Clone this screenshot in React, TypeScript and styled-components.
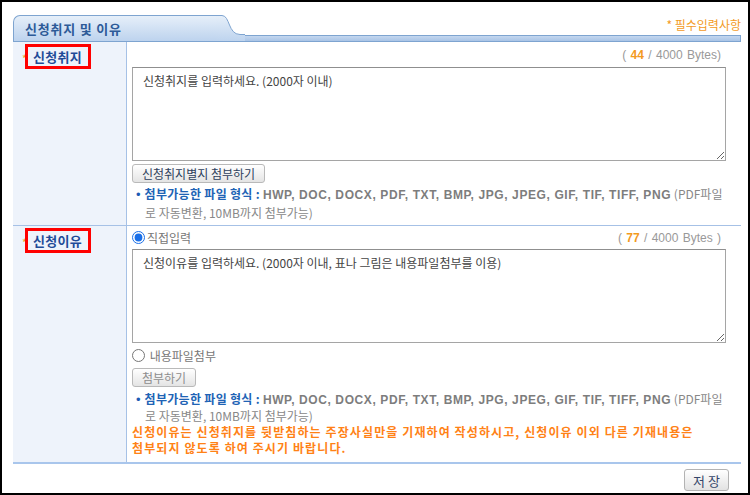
import React from 'react';
import styled, {createGlobalStyle} from 'styled-components';

const Global = createGlobalStyle`
  body{
    margin: 0;
    font-family: "Noto Sans CJK KR", "Noto Sans", sans-serif;
    font-size: 12px;
    color: #555;
  }
  *{ box-sizing: border-box; }
`

const Frame = styled.div`
  width: 750px;
  height: 495px;
  border: 2px solid #000;
  padding: 11px 7px 0 11px;
  background: white;
  display: flex;
  flex-direction: column;
`

const HeaderRow = styled.div`
  display: flex;
  align-items: flex-end;
  height: 29px;
`

const Tab = styled.div`
  width: 203px;
  height: 27px;
  border: 1px solid #7ea4d0;
  border-right: none;
  border-radius: 7px 0 0 0;
  background: linear-gradient(#e6eff9, #bdd3ee);
  color: #2d5a98;
  font-weight: bold;
  font-size: 13px;
  line-height: 25px;
  padding-left: 11px;
  letter-spacing: 0.8px;
`

const RightHead = styled.div`
  flex: 1;
  display: flex;
  flex-direction: column;
`

const Required = styled.div`
  height: 22px;
  padding-top: 5px;
  text-align: right;
  color: #f39a1e;
  font-size: 12px;
  line-height: 14px;
`

const Bar = styled.div`
  height: 7px;
  border: 1px solid #7ea4d0;
  border-left: none;
  background: linear-gradient(#c4d7ef, #a9c4e6);
`

const Table = styled.div`
  display: grid;
  grid-template-columns: 114px 1fr;
  border-bottom: 2px solid #a9c6ec;
`

const Label = styled.div<{h: number; divider?: boolean}>`
  height: ${p => p.h}px;
  background: #eef3fb;
  border-right: 1px solid #a6c1e6;
  border-bottom: ${p => p.divider ? '1px solid #a6c1e6' : 'none'};
  padding: 2px 0 0 9px;
  display: flex;
  align-items: flex-start;
`

const Star = styled.span`
  color: #f39a1e;
  font-size: 11px;
  line-height: 12px;
  width: 3px;
  margin-top: 8px;
`

const RedBox = styled.div`
  border: 3px solid #ff0000;
  width: 66px;
  height: 25px;
  color: #1f4b98;
  font-weight: bold;
  font-size: 13px;
  line-height: 19px;
  padding-left: 5px;
  letter-spacing: 0.3px;
`

const Cell = styled.div<{h: number; divider?: boolean}>`
  height: ${p => p.h}px;
  border-bottom: ${p => p.divider ? '1px solid #a6c1e6' : 'none'};
  padding: 0 15px 0 5px;
  display: flex;
  flex-direction: column;
`

const TopLine = styled.div<{h: number}>`
  height: ${p => p.h}px;
  display: flex;
  align-items: center;
  justify-content: space-between;
`

const Counter = styled.div`
  margin-left: auto;
  color: #999;
  font-family: "Liberation Sans", Arial, sans-serif;
  font-size: 12px;
  padding-right: 5px;
  word-spacing: 1px;
  b{ color: #f39a1e; font-weight: bold; }
`

const Area = styled.textarea<{h: number}>`
  width: 594px;
  height: ${p => p.h}px;
  border: 1px solid #a5a5a5;
  border-top-color: #8f8f8f;
  padding: 5px 10px;
  font-family: "Noto Sans CJK KR", sans-serif;
  font-size: 12px;
  line-height: 16px;
  color: #444;
  resize: vertical;
  outline: none;
`

const Btn = styled.button<{gap: number}>`
  height: 19px;
  margin-top: ${p => p.gap}px;
  padding: 0 9px;
  border: 1px solid #b9b9b9;
  border-radius: 3px;
  background: linear-gradient(#ffffff, #e4e4e4);
  font-family: "Noto Sans CJK KR", sans-serif;
  font-size: 12px;
  line-height: 15px;
  color: ${p => p.disabled ? '#8d8d8d' : '#2e3f5c'};
  align-self: flex-start;
  cursor: pointer;
`

const Notice = styled.div<{gap: number; lh: number}>`
  margin-top: ${p => p.gap}px;
  padding-left: 4px;
  font-size: 12px;
  line-height: ${p => p.lh}px;
  color: #888;
  white-space: nowrap;
  .dot{ color: #1d5bb4; font-size: 13px; margin-right: 4px; font-family: "Liberation Sans", Arial, sans-serif; }
  .lead{ color: #2063b5; font-weight: bold; letter-spacing: 0.3px; }
  .ext{ color: #7d7d7d; font-weight: bold; font-family: "Liberation Sans", Arial, sans-serif; letter-spacing: 0.6px; }
  .rest{ padding-left: 9px; }
`

const RadioLine = styled.label<{h: number}>`
  height: ${p => p.h}px;
  display: flex;
  align-items: center;
  color: #777;
  font-size: 12px;
  input{ margin: 0 2px 0 0; width: 13px; height: 13px; accent-color: #1a6fe8; }
`

const Warning = styled.div`
  color: #ff8216;
  font-weight: bold;
  font-size: 12px;
  line-height: 16px;
  letter-spacing: 1.1px;
  white-space: nowrap;
`

const Footer = styled.div`
  display: flex;
  justify-content: flex-end;
  padding: 5px 12px 0 0;
`

const SaveBtn = styled.button`
  width: 45px;
  height: 22px;
  border: 1px solid #b3b3b3;
  border-radius: 3px;
  background: linear-gradient(#ffffff, #e2e2e2);
  font-family: "Noto Sans CJK KR", sans-serif;
  font-size: 13px;
  color: #34466a;
  letter-spacing: 3px;
  padding: 0 0 0 3px;
`

function FileNotice({gap, lh}: {gap: number; lh: number}) {
  return (
    <Notice gap={gap} lh={lh}>
      <span className="dot">•</span>
      <span className="lead">첨부가능한 파일 형식 : </span>
      <span className="ext">HWP, DOC, DOCX, PDF, TXT, BMP, JPG, JPEG, GIF, TIF, TIFF, PNG</span> (PDF파일
      <br/>
      <span className="rest">로 자동변환, 10MB까지 첨부가능)</span>
    </Notice>
  )
}

export default function App() {
  return (
    <Frame>
      <Global/>
      <HeaderRow>
        <Tab>신청취지 및 이유</Tab>
        <svg width="29" height="27" viewBox="0 0 29 27" style={{display: 'block'}}>
          <defs>
            <linearGradient id="tabg" x1="0" y1="0" x2="0" y2="1">
              <stop offset="0" stopColor="#e6eff9"/>
              <stop offset="1" stopColor="#bdd3ee"/>
            </linearGradient>
          </defs>
          <path d="M0 0.5 H6 C14 0.5 12 19.5 24 19.5 H29 V26.5 H0 Z" fill="url(#tabg)"/>
          <path d="M0 0.5 H6 C14 0.5 12 19.5 24 19.5 H29" fill="none" stroke="#7ea4d0"/>
          <path d="M0 26.5 H29" stroke="#7ea4d0"/>
        </svg>
        <RightHead>
          <Required>* 필수입력사항</Required>
          <Bar/>
        </RightHead>
      </HeaderRow>
      <Table>
        <Label h={184} divider>
          <Star>*</Star>
          <RedBox>신청취지</RedBox>
        </Label>
        <Cell h={184} divider>
          <TopLine h={25}>
            <Counter>( <b>44</b> / 4000 Bytes)</Counter>
          </TopLine>
          <Area h={94} defaultValue="신청취지를 입력하세요. (2000자 이내)"/>
          <Btn gap={3}>신청취지별지 첨부하기</Btn>
          <FileNotice gap={2} lh={18}/>
        </Cell>
        <Label h={236}>
          <Star>*</Star>
          <RedBox>신청이유</RedBox>
        </Label>
        <Cell h={236}>
          <TopLine h={23}>
            <RadioLine h={23}>
              <input type="radio" name="reason" defaultChecked/>직접입력
            </RadioLine>
            <Counter>( <b>77</b> / 4000 Bytes )</Counter>
          </TopLine>
          <Area h={94} defaultValue="신청이유를 입력하세요. (2000자 이내, 표나 그림은 내용파일첨부를 이용)"/>
          <RadioLine h={24}>
            <input type="radio" name="reason"/>&nbsp;내용파일첨부
          </RadioLine>
          <Btn gap={1} disabled>첨부하기</Btn>
          <FileNotice gap={4} lh={16}/>
          <Warning>
            신청이유는 신청취지를 뒷받침하는 주장사실만을 기재하여 작성하시고, 신청이유 이외 다른 기재내용은<br/>
            첨부되지 않도록 하여 주시기 바랍니다.
          </Warning>
        </Cell>
      </Table>
      <Footer>
        <SaveBtn>저장</SaveBtn>
      </Footer>
    </Frame>
  )
}
